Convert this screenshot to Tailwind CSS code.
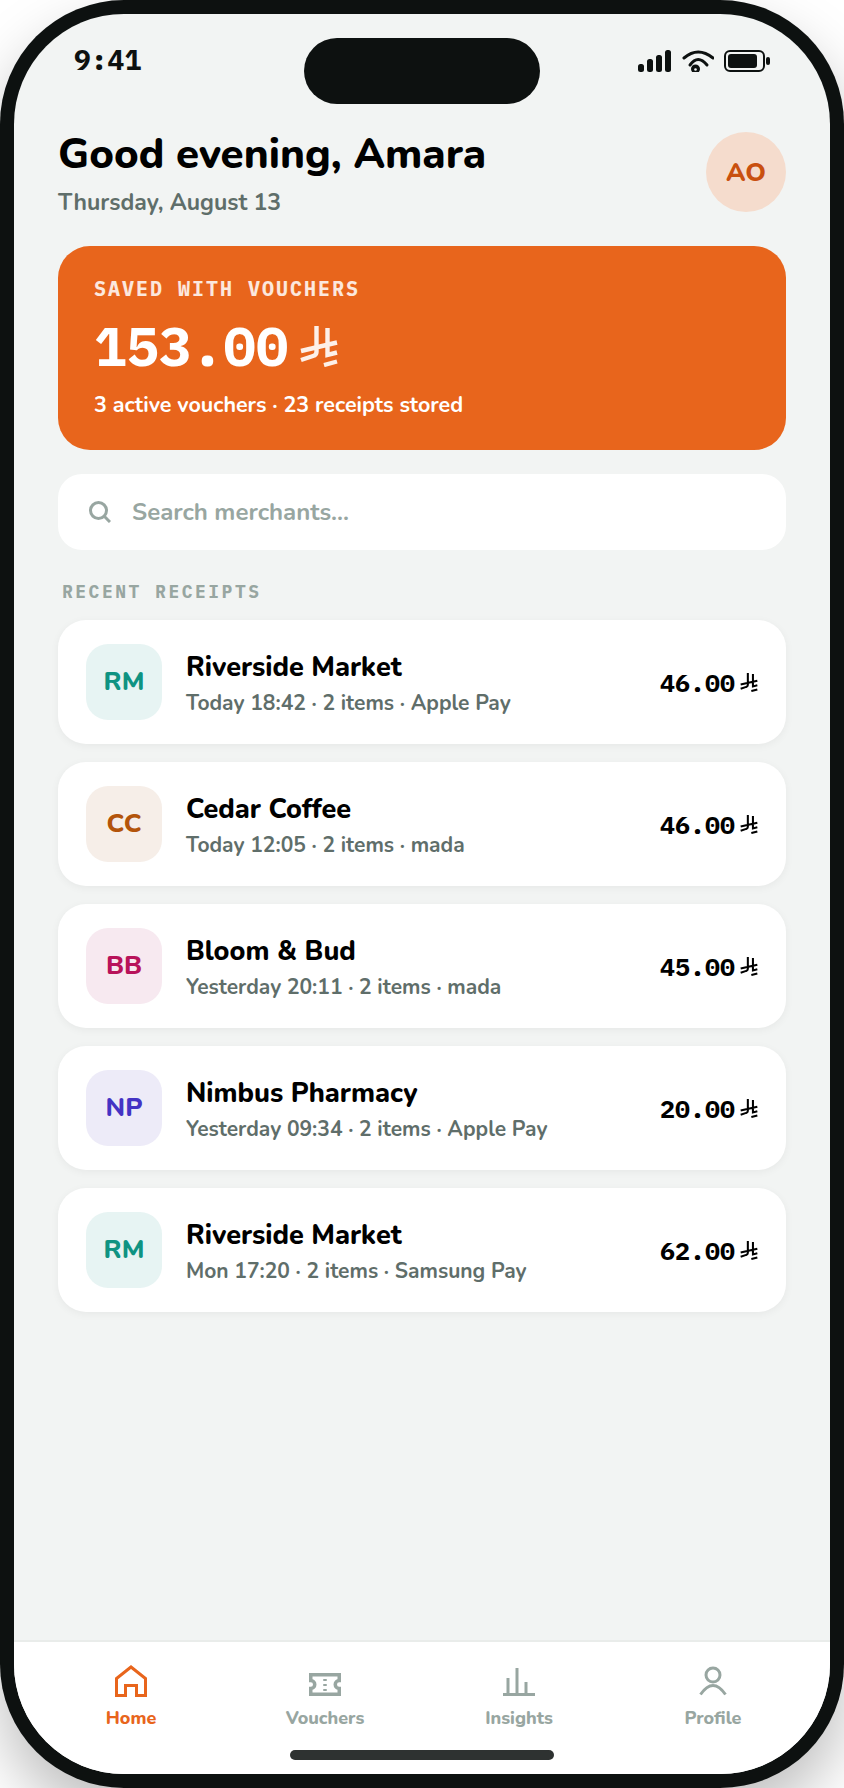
<!DOCTYPE html>
<html lang="en">
<head>
<meta charset="UTF-8">
<title>Receipts</title>
<script src="https://cdn.jsdelivr.net/npm/@tailwindcss/browser@4"></script>
</head>
<body class="w-[844px] h-[1788px] overflow-hidden bg-white font-['Nunito','Open_Sans','Noto_Sans',sans-serif]">
<svg class="hidden">
  <symbol id="riyal" viewBox="0 0 38 41"><path d="M16.500 0V26Q16.500 29 13 30L1 34M1 25L37 16.500M27.500 2V29L37 26.500M24 39L37 35.500" fill="none" stroke="currentColor" stroke-width="4.400"/></symbol>
</svg>

<!-- Phone frame -->
<div class="w-[844px] h-[1788px] rounded-[124px] bg-[#0d1110] p-[14px] shadow-[0_30px_60px_rgba(0,0,0,0.25)]">
  <div class="relative w-full h-full rounded-[110px] bg-[#f2f4f3] overflow-hidden flex flex-col">

    <!-- Dynamic island -->
    <div class="absolute top-[24px] left-[290px] w-[236px] h-[66px] rounded-full bg-[#0d1110]"></div>

    <!-- Status bar -->
    <div class="h-[50px] mt-[32px] pl-[60px] pr-[60px] flex justify-between items-start shrink-0">
      <span class="-mt-[1px] text-[28px] leading-[30px] font-bold text-[#0d1110] font-['IBM_Plex_Mono','Liberation_Mono',monospace]">9:41</span>
      <div class="flex items-start gap-[10px] pt-[4px]">
        <svg width="34" height="22" viewBox="0 0 34 22" fill="#0d1110"><rect x="0" y="14" width="6" height="8" rx="2.500"/><rect x="9" y="9" width="6" height="13" rx="2.500"/><rect x="18" y="5" width="6" height="17" rx="2.500"/><rect x="27" y="0" width="6" height="22" rx="2.500"/></svg>
        <svg width="32" height="22" viewBox="0 0 32 22"><g fill="none" stroke="#0d1110" stroke-width="3" stroke-linecap="round"><path d="M2 8Q16 -4 31 8"/><path d="M8 15Q16 4 25 15"/></g><circle cx="13.500" cy="19" r="4.500" fill="#0d1110"/><circle cx="13.500" cy="19.500" r="1.300" fill="#f2f4f3"/></svg>
        <svg width="46" height="22" viewBox="0 0 46 22"><rect x="1" y="1" width="39" height="20" rx="5" fill="none" stroke="#0d1110" stroke-width="2"/><rect x="4" y="4" width="29" height="14" rx="3" fill="#0d1110"/><rect x="42" y="7" width="4" height="8" rx="2" fill="#0d1110"/></svg>
      </div>
    </div>

    <!-- Content -->
    <div class="flex-1 px-[44px]">
      <div class="flex justify-between items-start pt-[36px] h-[150px]">
        <div>
          <h1 class="-mt-[2px] text-[42px] leading-[50px] font-extrabold text-black">Good evening, Amara</h1>
          <p class="mt-[7px] text-[23px] leading-[32px] font-bold text-[#5f6e6a]">Thursday, August 13</p>
        </div>
        <div class="w-[80px] h-[80px] rounded-full bg-[#f5dccd] flex items-center justify-center text-[26px] font-extrabold text-[#c9500f]">AO</div>
      </div>

      <!-- Savings card -->
      <div class="h-[204px] rounded-[32px] bg-[#e8651c] px-[36px] pt-[30px] text-white">
        <p class="text-[20px] leading-[26px] font-bold tracking-[2px] text-white/85 font-['IBM_Plex_Mono','Liberation_Mono',monospace]">SAVED WITH VOUCHERS</p>
        <div class="mt-[12px] flex items-center gap-[12px]">
          <span class="text-[54px] leading-[64px] font-bold font-['IBM_Plex_Mono','Liberation_Mono',monospace]">153.00</span>
          <svg class="w-[38px] h-[41px] text-white/90"><use href="#riyal"/></svg>
        </div>
        <p class="mt-[13px] text-[21.500px] leading-[28px] font-bold">3 active vouchers · 23 receipts stored</p>
      </div>

      <!-- Search -->
      <div class="mt-[24px] h-[76px] rounded-[24px] bg-white flex items-center pl-[31px] gap-[21px]">
        <svg width="22" height="22" viewBox="0 0 22 22" fill="none" stroke="#98a6a1" stroke-width="3"><circle cx="9.500" cy="9.500" r="8"/><path d="M15.500 15.500L21 21"/></svg>
        <span class="text-[24px] font-bold text-[#98a6a1]">Search merchants...</span>
      </div>

      <p class="mt-[30px] pl-[4px] text-[18px] leading-[24px] font-bold tracking-[2.500px] text-[#98a6a1] font-['IBM_Plex_Mono','Liberation_Mono',monospace]">RECENT RECEIPTS</p>

      <!-- Receipts -->
      <div class="mt-[16px] flex flex-col gap-[18px]">
        <div class="h-[124px] rounded-[28px] bg-white shadow-[0_2px_8px_rgba(13,17,16,0.05)] flex items-center px-[28px]">
          <div class="w-[76px] h-[76px] pb-[2px] rounded-[22px] bg-[#e7f4f3] flex items-center justify-center text-[26px] font-extrabold text-[#0f9382]">RM</div>
          <div class="ml-[24px] flex-1">
            <p class="mt-[1px] text-[27px] leading-[40px] font-extrabold text-black">Riverside Market</p>
            <p class="text-[21px] leading-[30px] font-bold text-[#5f6e6a]">Today 18:42 · 2 items · Apple Pay</p>
          </div>
          <div class="flex items-center gap-[5px] text-black pt-[1px]">
            <span class="text-[25px] font-bold font-['IBM_Plex_Mono','Liberation_Mono',monospace]">46.00</span>
            <svg class="w-[18px] h-[19px]"><use href="#riyal"/></svg>
          </div>
        </div>
        <div class="h-[124px] rounded-[28px] bg-white shadow-[0_2px_8px_rgba(13,17,16,0.05)] flex items-center px-[28px]">
          <div class="w-[76px] h-[76px] pb-[2px] rounded-[22px] bg-[#f6eee8] flex items-center justify-center text-[26px] font-extrabold text-[#b3540a]">CC</div>
          <div class="ml-[24px] flex-1">
            <p class="mt-[1px] text-[27px] leading-[40px] font-extrabold text-black">Cedar Coffee</p>
            <p class="text-[21px] leading-[30px] font-bold text-[#5f6e6a]">Today 12:05 · 2 items · mada</p>
          </div>
          <div class="flex items-center gap-[5px] text-black pt-[1px]">
            <span class="text-[25px] font-bold font-['IBM_Plex_Mono','Liberation_Mono',monospace]">46.00</span>
            <svg class="w-[18px] h-[19px]"><use href="#riyal"/></svg>
          </div>
        </div>
        <div class="h-[124px] rounded-[28px] bg-white shadow-[0_2px_8px_rgba(13,17,16,0.05)] flex items-center px-[28px]">
          <div class="w-[76px] h-[76px] pb-[2px] rounded-[22px] bg-[#f7e9f0] flex items-center justify-center text-[26px] font-extrabold text-[#b8135a]">BB</div>
          <div class="ml-[24px] flex-1">
            <p class="mt-[1px] text-[27px] leading-[40px] font-extrabold text-black">Bloom &amp; Bud</p>
            <p class="text-[21px] leading-[30px] font-bold text-[#5f6e6a]">Yesterday 20:11 · 2 items · mada</p>
          </div>
          <div class="flex items-center gap-[5px] text-black pt-[1px]">
            <span class="text-[25px] font-bold font-['IBM_Plex_Mono','Liberation_Mono',monospace]">45.00</span>
            <svg class="w-[18px] h-[19px]"><use href="#riyal"/></svg>
          </div>
        </div>
        <div class="h-[124px] rounded-[28px] bg-white shadow-[0_2px_8px_rgba(13,17,16,0.05)] flex items-center px-[28px]">
          <div class="w-[76px] h-[76px] pb-[2px] rounded-[22px] bg-[#edebf8] flex items-center justify-center text-[26px] font-extrabold text-[#4433c4]">NP</div>
          <div class="ml-[24px] flex-1">
            <p class="mt-[1px] text-[27px] leading-[40px] font-extrabold text-black">Nimbus Pharmacy</p>
            <p class="text-[21px] leading-[30px] font-bold text-[#5f6e6a]">Yesterday 09:34 · 2 items · Apple Pay</p>
          </div>
          <div class="flex items-center gap-[5px] text-black pt-[1px]">
            <span class="text-[25px] font-bold font-['IBM_Plex_Mono','Liberation_Mono',monospace]">20.00</span>
            <svg class="w-[18px] h-[19px]"><use href="#riyal"/></svg>
          </div>
        </div>
        <div class="h-[124px] rounded-[28px] bg-white shadow-[0_2px_8px_rgba(13,17,16,0.05)] flex items-center px-[28px]">
          <div class="w-[76px] h-[76px] pb-[2px] rounded-[22px] bg-[#e7f4f3] flex items-center justify-center text-[26px] font-extrabold text-[#0f9382]">RM</div>
          <div class="ml-[24px] flex-1">
            <p class="mt-[1px] text-[27px] leading-[40px] font-extrabold text-black">Riverside Market</p>
            <p class="text-[21px] leading-[30px] font-bold text-[#5f6e6a]">Mon 17:20 · 2 items · Samsung Pay</p>
          </div>
          <div class="flex items-center gap-[5px] text-black pt-[1px]">
            <span class="text-[25px] font-bold font-['IBM_Plex_Mono','Liberation_Mono',monospace]">62.00</span>
            <svg class="w-[18px] h-[19px]"><use href="#riyal"/></svg>
          </div>
        </div>
      </div>
    </div>

    <!-- Tab bar -->
    <div class="relative h-[134px] shrink-0 bg-white border-t-2 border-[#e9ecea] grid grid-cols-4 px-[20px] pt-[23px]">
      <div class="flex flex-col items-center text-[#e8651c]">
        <svg width="32" height="32" viewBox="0 0 32 32" fill="none" stroke="currentColor" stroke-width="3"><path d="M1.500 30.500V13.500L16 2L30.500 13.500V30.500H21.500V20.500H10.500V30.500Z"/></svg>
        <span class="mt-[8px] text-[18px] leading-[26px] font-extrabold">Home</span>
      </div>
      <div class="flex flex-col items-center text-[#98a6a1]">
        <svg width="32" height="32" viewBox="0 0 32 32" fill="none" stroke="currentColor" stroke-width="3.500"><path d="M1.750 9.750H30.250V15.500A4 4 0 0 0 30.250 23.500V29.250H1.750V23.500A4 4 0 0 0 1.750 15.500Z"/><path d="M16 14V16M16 19V21M16 24V26"/></svg>
        <span class="mt-[8px] text-[18px] leading-[26px] font-extrabold">Vouchers</span>
      </div>
      <div class="flex flex-col items-center text-[#98a6a1]">
        <svg width="32" height="32" viewBox="0 0 32 32" fill="none" stroke="currentColor" stroke-width="3"><path d="M0 29.500H32M5 28V13M14 28V3M23 28V17"/></svg>
        <span class="mt-[8px] text-[18px] leading-[26px] font-extrabold">Insights</span>
      </div>
      <div class="flex flex-col items-center text-[#98a6a1]">
        <svg width="32" height="32" viewBox="0 0 32 32" fill="none" stroke="currentColor" stroke-width="3"><circle cx="16" cy="10" r="7"/><path d="M3.500 29.500Q16 11.500 28.500 29.500"/></svg>
        <span class="mt-[8px] text-[18px] leading-[26px] font-extrabold">Profile</span>
      </div>
      <div class="absolute bottom-[14px] left-[276px] w-[264px] h-[10px] rounded-full bg-[#2e3231]"></div>
    </div>
  </div>
</div>
</body>
</html>
